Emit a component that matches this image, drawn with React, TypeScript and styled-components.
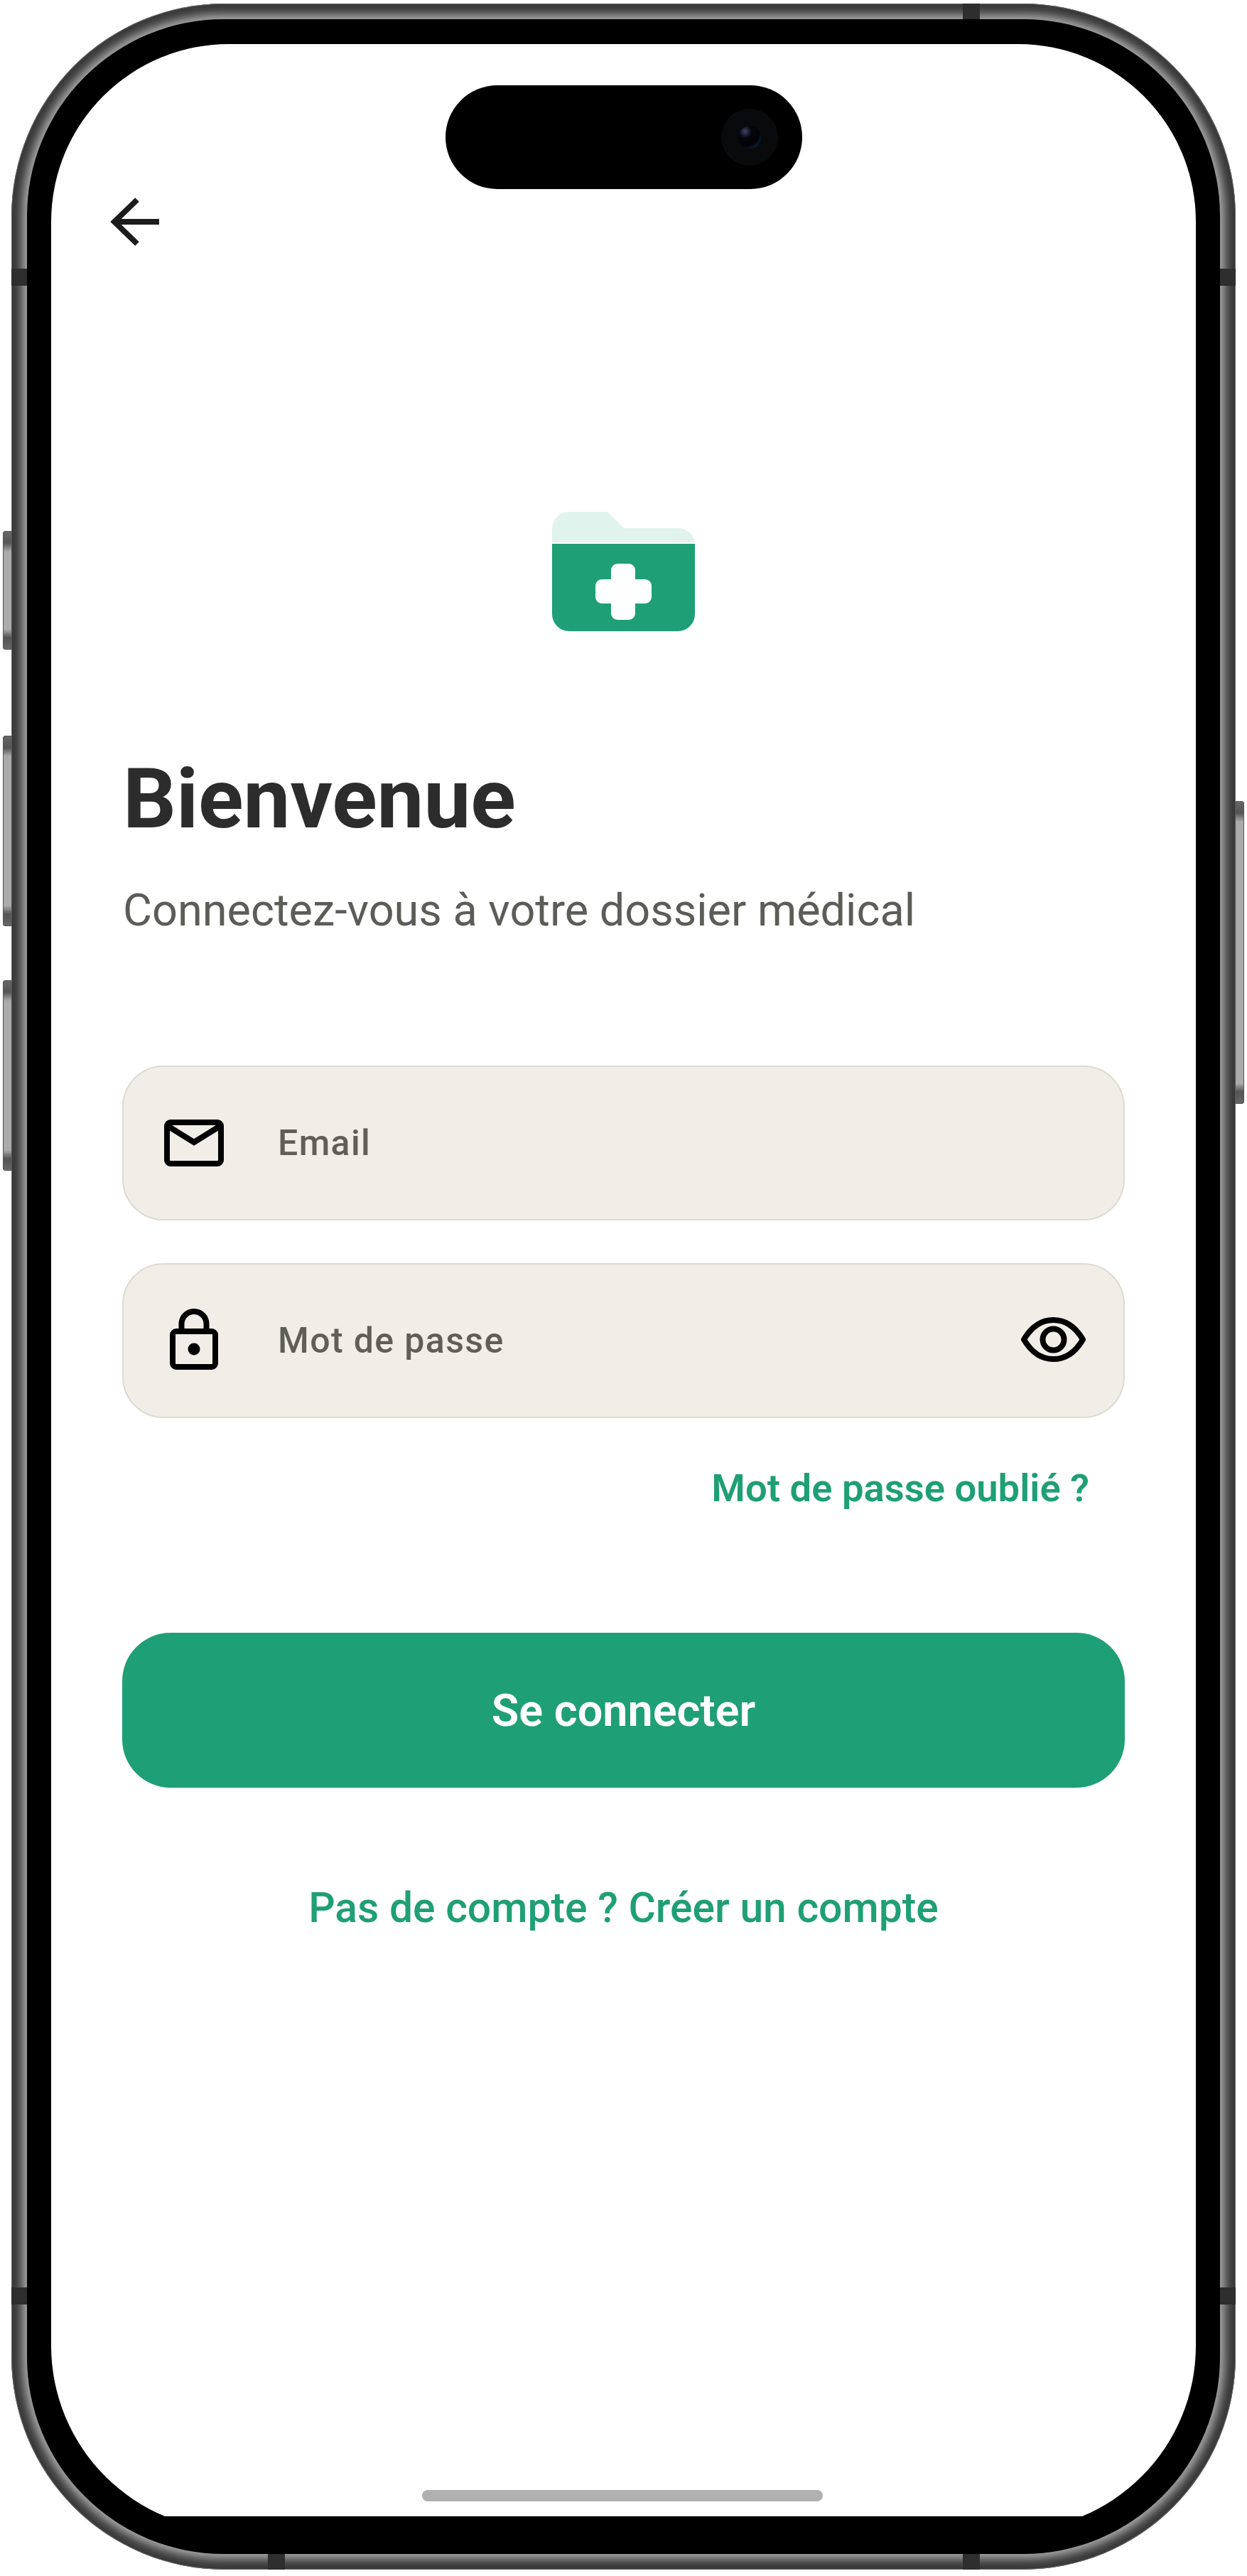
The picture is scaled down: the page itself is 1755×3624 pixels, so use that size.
import styled, { createGlobalStyle } from "styled-components";

const GlobalStyle = createGlobalStyle`
    html, body {
        margin: 0;
        padding: 0;
        background: #ffffff;
    }

    * {
        box-sizing: border-box;
    }
`;

const GREEN = "#1f9f75";

const Page = styled.div`
    width: 1755px;
    height: 3624px;
    padding: 5px 16px 9px 16px;
    font-family: Roboto, "Liberation Sans", sans-serif;
`;

const Device = styled.div`
    position: relative;
    width: 1723px;
    height: 3610px;
    padding: 22px;
    border-radius: 300px;
    background: #383838;
    box-shadow: inset 0 0 0 1px #666;
`;

const SideButton = styled.div<{ $top: number; $height: number; $right?: boolean }>`
    position: absolute;
    top: ${(props) => props.$top}px;
    height: ${(props) => props.$height}px;
    width: 13px;
    ${(props) => (props.$right ? "right: -12px;" : "left: -12px;")}
    border-radius: ${(props) => (props.$right ? "0 3px 3px 0" : "3px 0 0 3px")};
    border: 1px solid #555;
    background: linear-gradient(
        180deg,
        #666 0,
        #555 16px,
        #ababab 28px,
        #ababab calc(100% - 28px),
        #555 calc(100% - 16px),
        #666 100%
    );
`;

const Antenna = styled.div<{ $side: "left" | "right" | "top" | "bottom"; $at: number }>`
    position: absolute;
    background: #2e2e2e;
    ${(props) =>
        props.$side === "left" || props.$side === "right"
            ? `top: ${props.$at}px; width: 22px; height: 24px; ${props.$side}: 0;`
            : `left: ${props.$at}px; height: 22px; width: 24px; ${props.$side}: 0;`}
`;

const Bezel = styled.div`
    position: relative;
    width: 100%;
    height: 100%;
    padding: 35px 34px 53px;
    border-radius: 277px;
    background: #000000;
    box-shadow: 0 0 13px 7px #a8a8a8;
`;

const ScreenClip = styled.div`
    height: 3478px;
    overflow: hidden;
`;

const Screen = styled.div`
    position: relative;
    height: 3498px;
    padding: 58px 100px 0 100px;
    border-radius: 250px 250px 260px 260px;
    background: #ffffff;
    display: flex;
    flex-direction: column;
`;

const Island = styled.div`
    align-self: center;
    flex: none;
    width: 502px;
    height: 146px;
    padding-right: 34px;
    border-radius: 73px;
    background: #000000;
    display: flex;
    align-items: center;
    justify-content: flex-end;
`;

const Camera = styled.div`
    width: 80px;
    height: 80px;
    border-radius: 50%;
    background: #090a0b;
    display: flex;
    align-items: center;
    justify-content: center;

    &::before {
        content: "";
        width: 32px;
        height: 32px;
        border-radius: 50%;
        background: radial-gradient(circle at 30% 25%, #3f4468 0, #05060c 28%, #010206 62%, #0f3350 88%);
    }
`;

const BackButton = styled.button`
    align-self: flex-start;
    width: 70px;
    height: 68px;
    margin: 12px 0 0 -17px;
    padding: 0;
    border: none;
    background: none;
    display: flex;
`;

const LogoBox = styled.div`
    margin-top: 374px;
    display: flex;
    justify-content: center;
`;

const Title = styled.h1`
    margin: 168px 0 0 1px;
    font-size: 117.5px;
    line-height: 136px;
    font-weight: 700;
    color: #2c2c2c;
`;

const Subtitle = styled.p`
    margin: 49px 0 0 1px;
    font-size: 63px;
    line-height: 80px;
    font-weight: 400;
    color: #5c5c58;
`;

const Form = styled.div`
    margin-top: 178px;
    display: flex;
    flex-direction: column;
    gap: 60px;
`;

const Field = styled.div`
    height: 218px;
    padding: 0 53px 0 0;
    border: 2px solid #dcdad2;
    border-radius: 58px;
    background: #f1eee7;
    display: flex;
    align-items: center;
`;

const FieldIcon = styled.div<{ $lift?: number }>`
    width: 217px;
    flex: none;
    display: flex;
    justify-content: center;
    padding-right: 20px;
    margin-bottom: ${(props) => props.$lift || 0}px;
`;

const EyeToggle = styled.div`
    display: flex;
    margin-bottom: 4px;
`;

const Placeholder = styled.span`
    flex: 1;
    font-size: 50px;
    font-weight: 500;
    letter-spacing: 1.4px;
    color: #5f5e59;
`;

const ForgotLink = styled.a`
    align-self: flex-end;
    margin: 66px 50px 0 0;
    font-size: 54.4px;
    line-height: 66px;
    font-weight: 600;
    color: ${GREEN};
`;

const SubmitButton = styled.button`
    display: block;
    width: 100%;
    height: 218px;
    margin-top: 170px;
    border: none;
    border-radius: 68px;
    background: ${GREEN};
    font-family: inherit;
    font-size: 63px;
    font-weight: 600;
    color: #ffffff;
`;

const SignUpLink = styled.a`
    align-self: center;
    margin-top: 129px;
    font-size: 58.8px;
    line-height: 80px;
    font-weight: 500;
    color: ${GREEN};
`;

const HomeIndicator = styled.div`
    position: absolute;
    left: 522px;
    bottom: 41px;
    width: 564px;
    height: 16px;
    border-radius: 8px;
    background: #b0b0b0;
`;

const BackIcon = () => (
    <svg width="70" height="68" viewBox="0 0 70 68" fill="none" stroke="#1c1c1c" strokeWidth="8">
        <path d="M69 34H6M38 3L6 34l32 31" />
    </svg>
);

const FolderLogo = () => (
    <svg width="201" height="168" viewBox="0 0 201 168">
        <path
            d="M0 43V24A24 24 0 0 1 24 0H78L101 23H177A24 24 0 0 1 201 43Z"
            fill="#e0f3ec"
        />
        <path d="M0 45H201V144A24 24 0 0 1 177 168H24A24 24 0 0 1 0 144Z" fill={GREEN} />
        <path
            d="M92 73H108A9 9 0 0 1 117 82V95H131A9 9 0 0 1 140 104V120A9 9 0 0 1 131 129H117V143A9 9 0 0 1 108 152H92A9 9 0 0 1 83 143V129H70A9 9 0 0 1 61 120V104A9 9 0 0 1 70 95H83V82A9 9 0 0 1 92 73Z"
            fill="#ffffff"
        />
    </svg>
);

const MailIcon = () => (
    <svg width="84" height="66" viewBox="0 0 84 66" fill="none" stroke="#000" strokeWidth="8">
        <rect x="4" y="4" width="76" height="58" rx="5" />
        <path d="M5 9L42 32L79 9" />
    </svg>
);

const LockIcon = () => (
    <svg width="68" height="86" viewBox="0 0 68 86" fill="none" stroke="#000" strokeWidth="8">
        <rect x="4" y="32" width="60" height="50" rx="5" />
        <path d="M16.5 32V21.5a17.5 17.5 0 0 1 35 0V32" />
        <circle cx="34" cy="57" r="8.5" fill="#000" stroke="none" />
    </svg>
);

const EyeIcon = () => (
    <svg width="91" height="63" viewBox="0 0 91 63" fill="none" stroke="#000" strokeWidth="8">
        <path d="M4 31.5C15 13 29 4 45.5 4S76 13 87 31.5C76 50 62 59 45.5 59S15 50 4 31.5Z" />
        <circle cx="45.5" cy="31.5" r="15" />
    </svg>
);

const App = () => {
    return (
        <Page>
            <GlobalStyle />
            <Device>
                <SideButton $top={742} $height={167} />
                <SideButton $top={1030} $height={268} />
                <SideButton $top={1374} $height={268} />
                <SideButton $top={1122} $height={426} $right />
                <Bezel>
                    <ScreenClip>
                        <Screen>
                            <Island>
                                <Camera />
                            </Island>
                            <BackButton>
                                <BackIcon />
                            </BackButton>
                            <LogoBox>
                                <FolderLogo />
                            </LogoBox>
                            <Title>Bienvenue</Title>
                            <Subtitle>Connectez-vous à votre dossier médical</Subtitle>
                            <Form>
                                <Field>
                                    <FieldIcon>
                                        <MailIcon />
                                    </FieldIcon>
                                    <Placeholder>Email</Placeholder>
                                </Field>
                                <Field>
                                    <FieldIcon $lift={4}>
                                        <LockIcon />
                                    </FieldIcon>
                                    <Placeholder>Mot de passe</Placeholder>
                                    <EyeToggle>
                                        <EyeIcon />
                                    </EyeToggle>
                                </Field>
                            </Form>
                            <ForgotLink>Mot de passe oublié ?</ForgotLink>
                            <SubmitButton>Se connecter</SubmitButton>
                            <SignUpLink>Pas de compte ? Créer un compte</SignUpLink>
                            <HomeIndicator />
                        </Screen>
                    </ScreenClip>
                </Bezel>
                <Antenna $side="left" $at={373} />
                <Antenna $side="left" $at={3213} />
                <Antenna $side="right" $at={373} />
                <Antenna $side="right" $at={3213} />
                <Antenna $side="top" $at={1339} />
                <Antenna $side="bottom" $at={361} />
                <Antenna $side="bottom" $at={1339} />
            </Device>
        </Page>
    );
};

export default App;
